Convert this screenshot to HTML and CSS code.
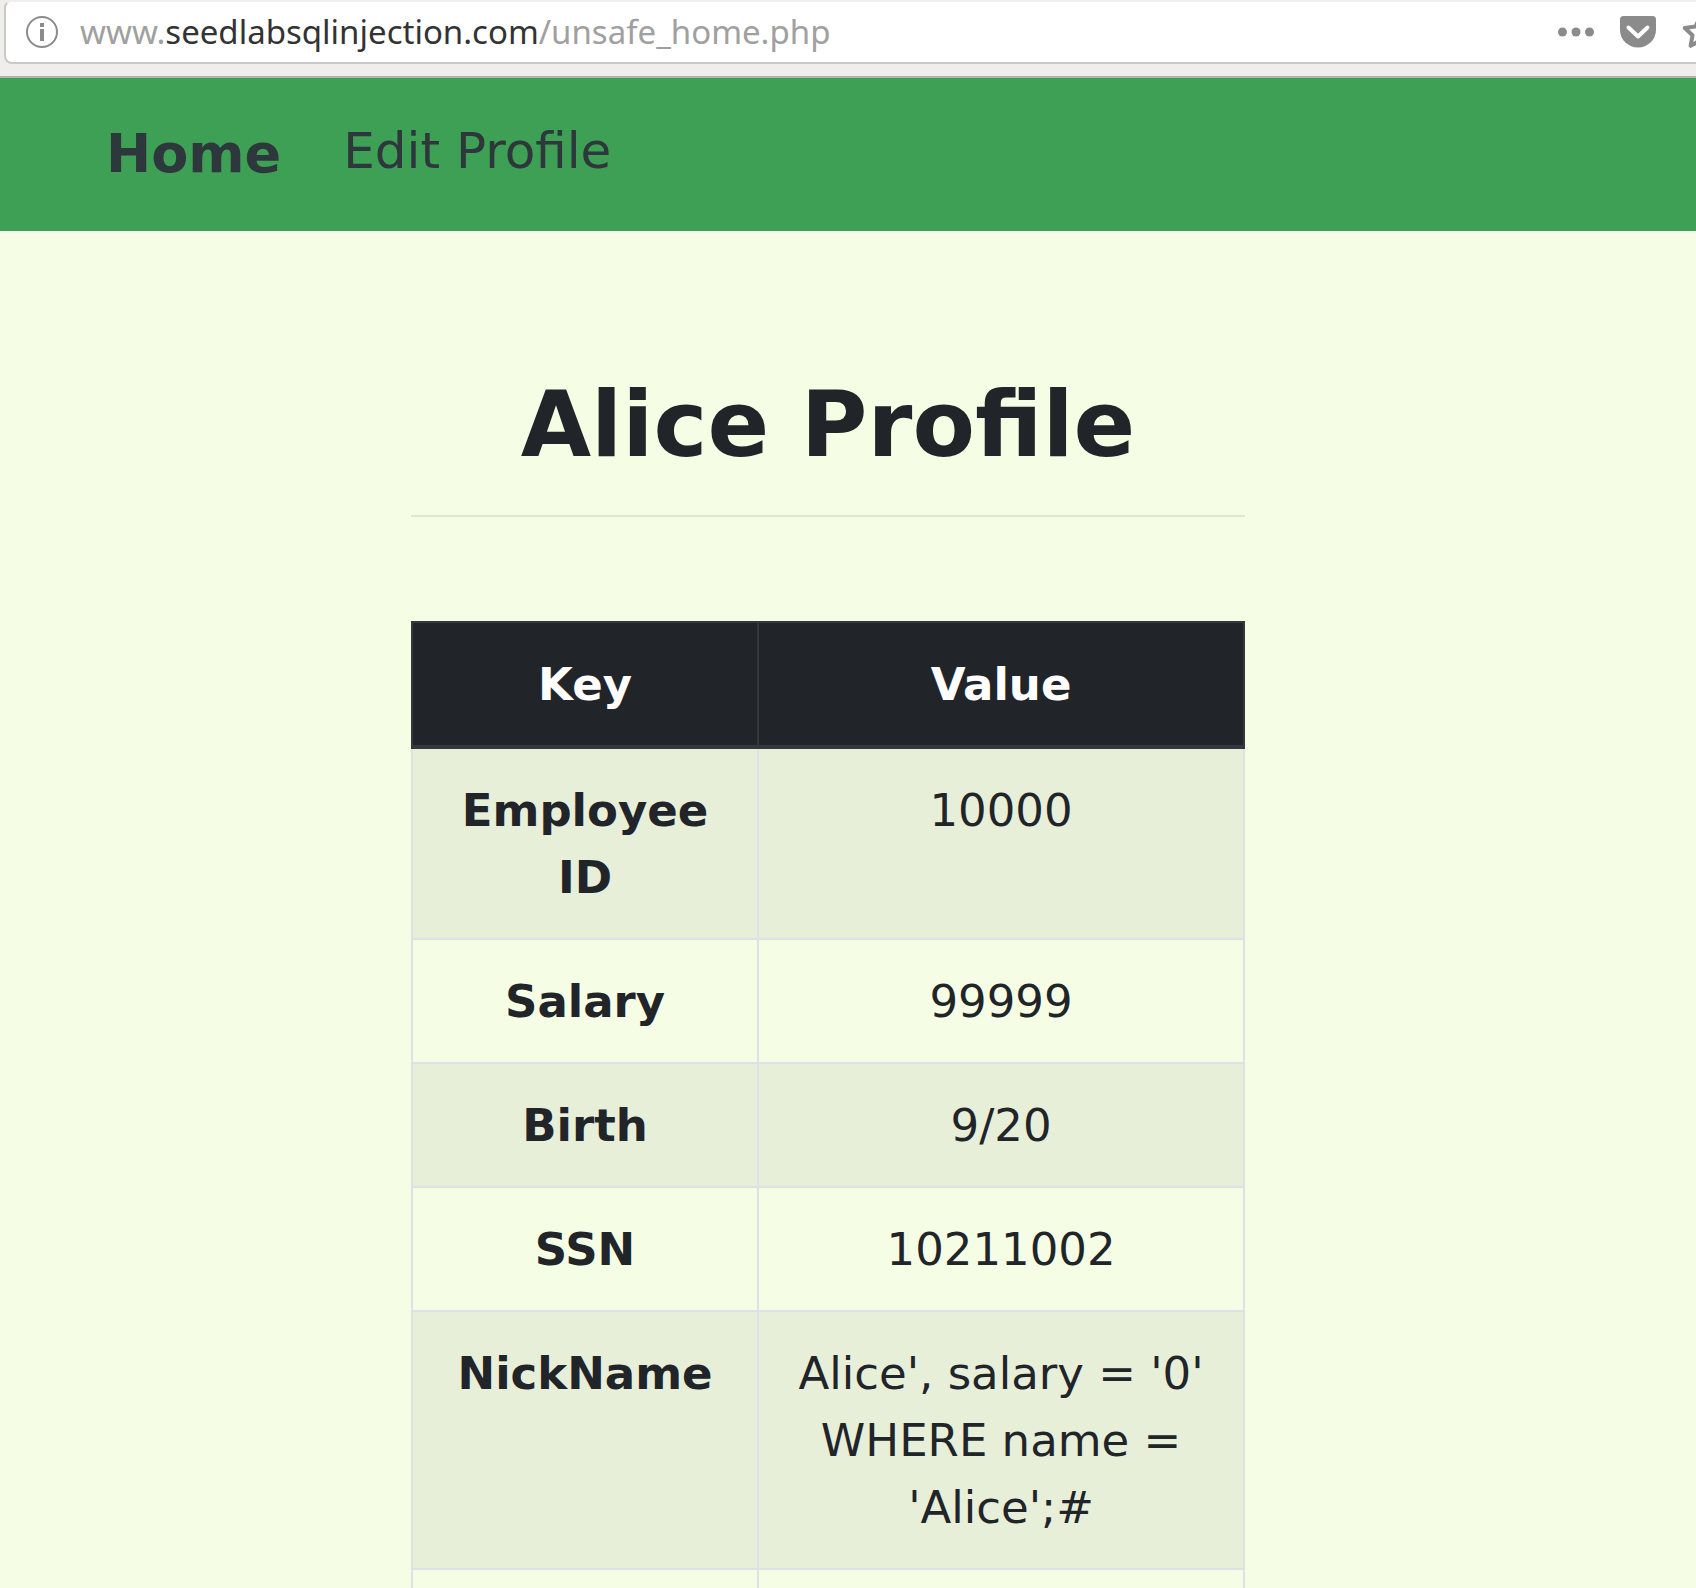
FILE: index.html
```html
<!DOCTYPE html>
<html lang="en">
<head>
<meta charset="utf-8">
<title>SQLi Lab</title>
<link rel="stylesheet" href="styles.css">
</head>
<body>
<header class="toolbar">
  <div class="urlbar">
    <button class="icon-button" type="button" aria-label="Site information">
      <svg width="32" height="32" viewBox="0 0 32 32" fill="none"><circle cx="16" cy="16" r="15" stroke="#8b8b8b" stroke-width="2"/><path d="M14 7h4v4h-4zM14 13h4v12h-4z" fill="#8b8b8b"/></svg>
    </button>
    <div class="address" role="textbox" aria-label="Address" contenteditable="true" spellcheck="false">www.<span class="domain">seedlabsqlinjection.com</span>/unsafe_home.php</div>
    <div class="actions">
      <button class="icon-button" type="button" aria-label="Page actions">
        <svg width="36" height="32" viewBox="0 0 36 32" fill="#8b8b8b"><circle cx="4.5" cy="16" r="4.5"/><circle cx="18" cy="16" r="4.5"/><circle cx="31.500" cy="16" r="4.5"/></svg>
      </button>
      <button class="icon-button" type="button" aria-label="Save to Pocket">
        <svg width="36" height="32" viewBox="0 0 36 32" fill="none"><path d="M3.500 0h29Q36 0 36 3.500V14A18 17.500 0 0 1 0 14V3.500Q0 0 3.500 0z" fill="#8b8b8b"/><path d="M8.500 11.500 18 20.500l9.500-9" stroke="#fff" stroke-width="4" stroke-linecap="round" stroke-linejoin="round"/></svg>
      </button>
      <button class="icon-button" type="button" aria-label="Bookmark this page">
        <svg width="36" height="36" viewBox="0 0 36 36" fill="none"><path d="M18 3l4.600 9.600 10.600 1.400-7.700 7.300 1.900 10.500L18 26.700l-9.400 5.100 1.900-10.500L2.800 14l10.600-1.400z" stroke="#8b8b8b" stroke-width="4" stroke-linejoin="round"/></svg>
      </button>
    </div>
  </div>
</header>
<nav class="navbar">
  <a class="nav-link nav-link-active" href="#home">Home</a>
  <a class="nav-link" href="#edit">Edit Profile</a>
</nav>
<main class="page">
  <section class="profile">
    <h1 class="title">Alice Profile</h1>
    <hr class="rule">
    <table class="table">
      <colgroup><col class="col-key"><col></colgroup>
      <thead>
        <tr><th scope="col">Key</th><th scope="col">Value</th></tr>
      </thead>
      <tbody>
        <tr><th scope="row">Employee ID</th><td>10000</td></tr>
        <tr><th scope="row">Salary</th><td>99999</td></tr>
        <tr><th scope="row">Birth</th><td>9/20</td></tr>
        <tr><th scope="row">SSN</th><td>10211002</td></tr>
        <tr><th scope="row">NickName</th><td>Alice', salary = '0' WHERE name = 'Alice';#</td></tr>
        <tr><td></td><td></td></tr>
      </tbody>
    </table>
  </section>
</main>
</body>
</html>
```
FILE: styles.css
```css
* {
  box-sizing: border-box;
}

body {
  display: flex;
  flex-direction: column;
  height: 100vh;
  margin: 0;
  overflow: hidden;
  background: #f5fee4;
  color: #212529;
  font-family: "DejaVu Sans", sans-serif;
  font-size: 45px;
  line-height: 67px;
}

/* Browser toolbar: the address field runs past the right edge */
.toolbar {
  flex: none;
  padding: 0 0 12px 4px;
  overflow: hidden;
  background: #f0eeec;
  border-bottom: 2px solid #b5b3af;
}

.urlbar {
  display: flex;
  align-items: center;
  gap: 22px;
  height: 64px;
  margin-right: -22px;
  padding: 0 0 0 20px;
  background: #fff;
  border: 2px solid #cbc9c7;
  border-top-color: #f0f0f0;
  border-right: 0;
  border-radius: 8px 0 0 8px;
}

.actions {
  display: flex;
  flex: none;
  align-items: center;
  gap: 26px;
}

.icon-button {
  display: flex;
  flex: none;
  padding: 0;
  background: none;
  border: 0;
}

.address {
  flex: 1;
  color: #a0a0a0;
  font-family: "Noto Sans", sans-serif;
  font-size: 33px;
  line-height: 40px;
  white-space: nowrap;
}

.domain {
  color: #333;
}

.navbar {
  display: flex;
  flex: none;
  align-items: flex-start;
  gap: 62px;
  height: 153px;
  padding: 40px 106px;
  background: #3ea055;
}

.nav-link {
  color: #2e373c;
  font-size: 50px;
  text-decoration: none;
}

.nav-link-active {
  font-size: 54px;
  font-weight: bold;
  line-height: 72px;
}

.page {
  display: grid;
  flex: 1;
  grid-template-columns: 411fr 834fr 451fr;
  min-height: 0;
  overflow: hidden;
}

.profile {
  grid-column: 2;
  min-width: 0;
  padding-top: 138px;
}

.title {
  margin: 0;
  font-size: 91px;
  line-height: 112px;
  text-align: center;
}

.rule {
  height: 2px;
  margin: 34px 0 104px;
  background: #dfe7cf;
  border: 0;
}

.table {
  width: 100%;
  border-collapse: collapse;
  table-layout: fixed;
  text-align: center;
}

.col-key {
  width: 41.6%;
}

.table th,
.table td {
  padding: 28px 27px 27px;
  border: 2px solid #dee2e6;
  vertical-align: top;
}

.table tbody tr:nth-child(odd) {
  background: #e8efd9;
}

.table thead th {
  background: #212529;
  border-color: #32383e;
  border-bottom-width: 4px;
  color: #fff;
}
```
